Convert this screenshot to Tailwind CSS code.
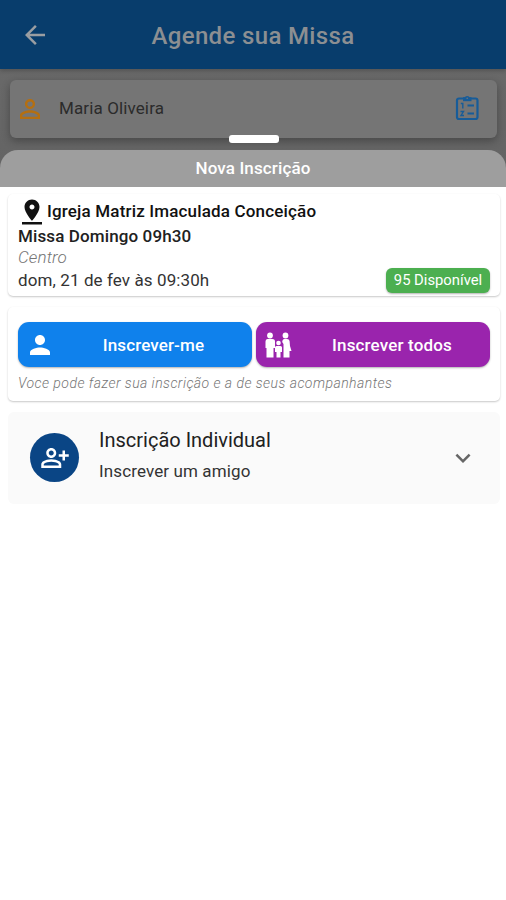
<!DOCTYPE html>
<html lang="pt-BR">
<head>
<meta charset="utf-8">
<title>Agende sua Missa</title>
<script src="https://cdn.jsdelivr.net/npm/@tailwindcss/browser@4"></script>
</head>
<body class="bg-white">
<div class="relative w-[506px] h-[900px] overflow-hidden bg-white font-[Roboto,sans-serif] text-[#212121] whitespace-nowrap">
  <div class="h-[188px] bg-gradient-to-b from-[#6c6c6c] to-[#636363]">
    <header class="relative flex h-[69px] items-center justify-center bg-[#083d6c] pt-[2px] shadow-[0_2px_4px_rgba(0,0,0,0.2)]">
      <svg class="absolute left-[20px] top-[20px] size-[30px] fill-[#9a9ea2]" viewBox="0 0 24 24"><path d="M20 11H7.83l5.59-5.59L12 4l-8 8 8 8 1.41-1.41L7.83 13H20v-2z"/></svg>
      <h1 class="text-[24px] font-medium text-[#8c8f92] tracking-[0.35px]">Agende sua Missa</h1>
    </header>
    <div class="ml-[10px] mt-[11px] mr-[9px] flex h-[58px] items-center rounded-[6px] bg-[#757575] pl-[5px] pr-[15px] shadow-[0_3px_8px_rgba(0,0,0,0.3)]">
      <svg class="size-[30px] fill-[#b56f10]" viewBox="0 0 24 24"><path d="M12 5.900a2.100 2.100 0 1 1 0 4.200 2.100 2.100 0 0 1 0-4.200m0 9c2.970 0 6.100 1.460 6.100 2.100v1.100H5.900V17c0-.64 3.130-2.100 6.100-2.100M12 4C9.790 4 8 5.790 8 8s1.790 4 4 4 4-1.790 4-4-1.790-4-4-4zm0 9c-2.670 0-8 1.340-8 4v3h16v-3c0-2.660-5.330-4-8-4z"/></svg>
      <span class="ml-[14px] text-[17px] tracking-[0.12px] text-[#2b2b2b]">Maria Oliveira</span>
      <svg class="ml-auto h-[30px] w-[30px]" viewBox="0 0 30 30" fill="none" stroke="#175c99" stroke-width="2.2"><rect x="5" y="4.500" width="20.500" height="20.500" rx="2"/><path d="M11 5.200h8.500" stroke-width="4"/><circle cx="15.200" cy="4.500" r="2.400" fill="#175c99" stroke="none"/><circle cx="15.200" cy="4.300" r=".8" fill="#757575" stroke="none"/><path d="M15.500 11.500h6.500M15.500 19.500h6.500"/><path d="M8.800 9.500h2v5M8.500 17.500h3l-2.500 4h3" stroke-width="1.400"/></svg>
    </div>
  </div>
  <div class="absolute left-[229px] top-[135px] h-[8px] w-[50px] rounded-[3px] bg-white"></div>
  <section class="absolute left-0 top-[150px] w-full">
    <h2 class="flex h-[37px] items-center justify-center rounded-t-[18px] bg-[#9e9e9e] text-[17px] font-medium tracking-[0.12px] text-white">Nova Inscrição</h2>
    <div class="h-[713px] bg-white pl-[8px] pr-[6px] pt-[7px]">
      <div class="h-[102px] rounded-[5px] bg-white px-[10px] pt-[4px] shadow-[0_1px_2px_rgba(0,0,0,0.22)]">
        <div class="flex h-[26px] items-center pt-[2px]">
          <svg class="-ml-px size-[30px] fill-[#111]" viewBox="0 0 24 24"><path d="M18 8c0-3.310-2.690-6-6-6S6 4.690 6 8c0 4.500 6 11 6 11s6-6.500 6-11zm-8 0c0-1.100.9-2 2-2s2 .9 2 2-.89 2-2 2-2-.9-2-2zM4 20v2h16v-2H4z"/></svg>
          <span class="text-[17px] font-medium tracking-[0.17px] text-[#111]">Igreja Matriz Imaculada Conceição</span>
        </div>
        <p class="text-[17px] font-medium leading-[24px] tracking-[0.12px]">Missa Domingo 09h30</p>
        <p class="text-[17px] font-light italic leading-[19px] tracking-[0.12px] text-[#757575]">Centro</p>
        <div class="flex items-center justify-between">
          <span class="text-[17px] leading-[24px] tracking-[0.1px] text-[#333]">dom, 21 de fev às 09:30h</span>
          <span class="mt-px flex h-[25px] w-[104px] items-center justify-center rounded-[6px] bg-[#4caf50] text-[14.800px] text-white shadow-[0_1px_2px_rgba(0,0,0,0.3)]">95 Disponível</span>
        </div>
      </div>
      <div class="mt-[11px] h-[94px] rounded-[5px] bg-white px-[10px] pt-[15px] shadow-[0_1px_2px_rgba(0,0,0,0.22)]">
        <div class="flex gap-[4px]">
          <div class="relative flex h-[45px] w-[234px] items-center justify-center rounded-[11px] bg-[#0f81ec] pl-[37px] text-[17px] font-medium tracking-[0.12px] text-white shadow-[0_1px_2px_rgba(0,0,0,0.3)]">
            <svg class="absolute left-[7px] top-[8px] size-[30px] fill-white" viewBox="0 0 24 24"><path d="M12 12c2.210 0 4-1.790 4-4s-1.790-4-4-4-4 1.790-4 4 1.790 4 4 4zm0 2c-2.670 0-8 1.340-8 4v2h16v-2c0-2.660-5.330-4-8-4z"/></svg>
            <span class="pt-[2px]">Inscrever-me</span>
          </div>
          <div class="relative flex h-[45px] w-[234px] items-center justify-center rounded-[11px] bg-[#9a24ad] pl-[38px] text-[17px] font-medium tracking-[0.15px] text-white shadow-[0_1px_2px_rgba(0,0,0,0.3)]">
            <svg class="absolute left-[8px] top-[10px] h-[27px] w-[28px] fill-white" viewBox="0 0 28 27"><circle cx="6" cy="3.500" r="2.900"/><path d="M3.500 7h5a2.500 2.500 0 0 1 2.500 2.500V16H9.500v9.500h-7V16H1.500V9.500A2.500 2.500 0 0 1 3.500 7z"/><circle cx="14.500" cy="11" r="2.300"/><path d="M12.500 14h4a1.500 1.500 0 0 1 1.500 1.500V20h-1.500v5.500h-4V20H11v-4.500a1.500 1.500 0 0 1 1.500-1.500z"/><circle cx="21.500" cy="3.500" r="2.900"/><path d="M20.500 7h2.500c1.500 0 2.200.8 2.600 2.200L26 14l1.500 5h-2v6.500h-6V12l-1.300-2C18.500 8 19 7 20.500 7z"/></svg>
            <span class="pt-[2px]">Inscrever todos</span>
          </div>
        </div>
        <p class="mt-[6px] text-[14px] font-light italic leading-[20px] tracking-[0.46px] text-[#757575]">Voce pode fazer sua inscrição e a de seus acompanhantes</p>
      </div>
      <div class="mt-[11px] flex h-[92px] items-center rounded-[6px] bg-[#fafafa] pl-[22px] pr-[22px]">
        <div class="-mt-px flex size-[49px] items-center justify-center rounded-full bg-[#0a4585]">
          <svg class="size-[30px] fill-white" viewBox="0 0 24 24"><path d="M20 9V6h-2v3h-3v2h3v3h2v-3h3V9zM9 12c2.210 0 4-1.790 4-4s-1.790-4-4-4-4 1.790-4 4 1.790 4 4 4zm0-6c1.100 0 2 .9 2 2s-.9 2-2 2-2-.9-2-2 .9-2 2-2zm6.390 8.560C13.710 13.700 11.530 13 9 13s-4.710.7-6.390 1.560C1.610 15.070 1 16.100 1 17.220V20h16v-2.780c0-1.120-.61-2.150-1.610-2.660zM15 18H3v-.78c0-.38.2-.72.520-.88C4.710 15.730 6.630 15 9 15s4.290.73 5.480 1.340c.32.16.52.5.52.88V18z"/></svg>
        </div>
        <div class="ml-[20px] -mt-[5px]">
          <p class="text-[20px] leading-[28px]">Inscrição Individual</p>
          <p class="mt-[3px] text-[17px] leading-[28px] tracking-[0.12px] text-[#333]">Inscrever um amigo</p>
        </div>
        <svg class="ml-auto size-[30px] fill-[#666]" viewBox="0 0 24 24"><path d="M16.590 8.590L12 13.170 7.410 8.590 6 10l6 6 6-6z"/></svg>
      </div>
    </div>
  </section>
</div>
</body>
</html>
